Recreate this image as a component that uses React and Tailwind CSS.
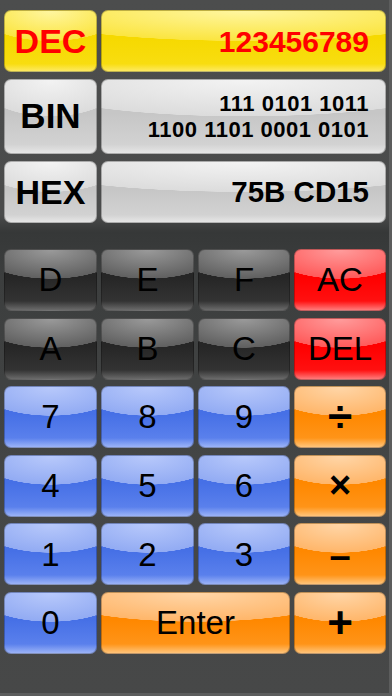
import React from 'react';

const skins = {
  yellow:
    'bg-[radial-gradient(ellipse_80%_50%_at_50%_0%,#fff6a0_0%,#fbe540_99%,transparent_100%),linear-gradient(to_bottom,#f6d900_45%,#f8dd10_88%,#fde960_100%)]',
  silver:
    'bg-[radial-gradient(ellipse_80%_50%_at_50%_0%,#f3f3f3_0%,#dcdcdc_99%,transparent_100%),linear-gradient(to_bottom,#c6c6c6_45%,#d2d2d2_88%,#e6e6e6_100%)]',
  dark:
    'bg-[radial-gradient(ellipse_80%_48%_at_50%_0%,#9a9a9a_0%,#606060_99%,transparent_100%),linear-gradient(to_bottom,#262626_45%,#333333_85%,#6a6a6a_100%)]',
  blue:
    'bg-[radial-gradient(ellipse_80%_48%_at_50%_0%,#b8c9fb_0%,#92abf3_99%,transparent_100%),linear-gradient(to_bottom,#4670e6_45%,#5a80ec_85%,#9bb3f7_100%)]',
  orange:
    'bg-[radial-gradient(ellipse_80%_48%_at_50%_0%,#ffd6a8_0%,#ffb66a_99%,transparent_100%),linear-gradient(to_bottom,#ff8800_45%,#ff9418_85%,#ffc47a_100%)]',
  red:
    'bg-[radial-gradient(ellipse_80%_48%_at_50%_0%,#ff9c9c_0%,#ff5a5a_99%,transparent_100%),linear-gradient(to_bottom,#ff0000_45%,#ff1010_85%,#ff7a7a_100%)]',
};

const Key = ({ skin, className = '', children }) => (
  <div
    className={`${skins[skin]} rounded-[7px] border border-black/25 flex items-center justify-center text-black ${className}`}
  >
    {children}
  </div>
);

const keys = [
  { label: 'D', skin: 'dark' },
  { label: 'E', skin: 'dark' },
  { label: 'F', skin: 'dark' },
  { label: 'AC', skin: 'red' },
  { label: 'A', skin: 'dark' },
  { label: 'B', skin: 'dark' },
  { label: 'C', skin: 'dark' },
  { label: 'DEL', skin: 'red' },
  { label: '7', skin: 'blue' },
  { label: '8', skin: 'blue' },
  { label: '9', skin: 'blue' },
  { label: '÷', skin: 'orange', size: 'text-[44px] font-bold' },
  { label: '4', skin: 'blue' },
  { label: '5', skin: 'blue' },
  { label: '6', skin: 'blue' },
  { label: '×', skin: 'orange', size: 'text-[38px] font-bold' },
  { label: '1', skin: 'blue' },
  { label: '2', skin: 'blue' },
  { label: '3', skin: 'blue' },
  { label: '–', skin: 'orange', size: 'text-[38px] font-bold pt-[4px]' },
  { label: '0', skin: 'blue' },
  { label: 'Enter', skin: 'orange', wide: true },
  { label: '+', skin: 'orange', size: 'text-[44px] font-bold' },
];

export default function App() {
  return (
    <div
      className="w-[392px] h-[696px] overflow-hidden flex flex-col border-r-[3px] border-b-[3px] border-[#5c5d5d] bg-[linear-gradient(to_bottom,#4c4d4d_0%,#4a4b4b_31%,#363838_33.5%,#3c3e3e_40%,#444646_70%,#474848_100%)]"
      style={{ fontFamily: '"Liberation Sans", Arial, sans-serif' }}
    >
      {/* Display */}
      <div className="grid grid-cols-[93px_285px] gap-x-[4px] gap-y-[7px] pt-[10px] pl-[4px]">
        <Key skin="yellow" className="h-[62px] text-[34px] font-bold !text-[#ff0000]">
          DEC
        </Key>
        <Key skin="yellow" className="h-[62px] !justify-end pr-[16px] text-[30px] font-bold !text-[#ff0000]">
          123456789
        </Key>
        <Key skin="silver" className="h-[75px] text-[35px] font-bold">
          BIN
        </Key>
        <Key skin="silver" className="h-[75px] !items-end !justify-center flex-col pr-[16px] text-[22px] font-bold tracking-[0.5px] leading-[26px] pt-[1px]">
          <span>111 0101 1011</span>
          <span>1100 1101 0001 0101</span>
        </Key>
        <Key skin="silver" className="h-[62px] text-[34px] font-bold">
          HEX
        </Key>
        <Key skin="silver" className="h-[62px] !justify-end pr-[16px] text-[29.5px] font-bold">
          75B CD15
        </Key>
      </div>

      {/* Keypad */}
      <div className="grid grid-cols-[93px_93px_92px_92px] auto-rows-[62px] gap-x-[4px] gap-y-[6.6px] pl-[4px] mt-[26px]">
        {keys.map((k) => (
          <Key
            key={k.label}
            skin={k.skin}
            className={`${k.wide ? 'col-span-2' : ''} ${k.size || 'text-[33px]'}`}
          >
            {k.label}
          </Key>
        ))}
      </div>
    </div>
  );
}
